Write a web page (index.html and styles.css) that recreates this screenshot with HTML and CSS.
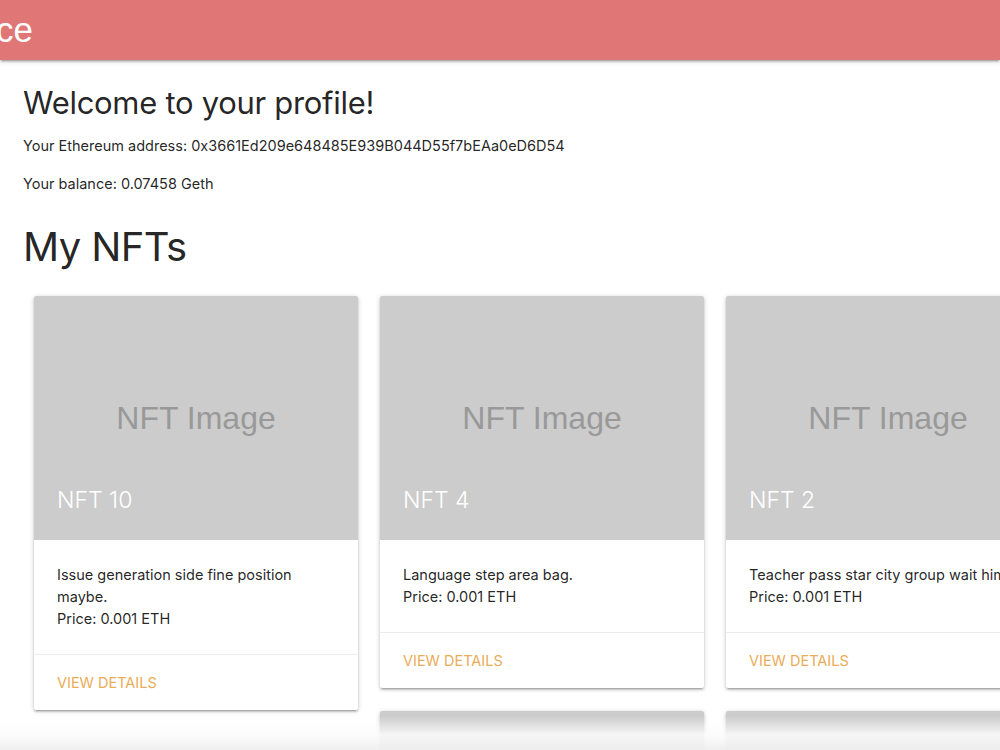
FILE: index.html
```
<!DOCTYPE html>
<html lang="en">

<head>
  <meta charset="UTF-8">
  <meta name="viewport" content="width=device-width, initial-scale=1.0">
  <title>My Profile</title>
  <link rel="stylesheet" href="styles.css">
</head>

<body>
  <nav class="navbar">
    <span class="brand">ce</span>
  </nav>

  <main class="profile">
    <h1 class="welcome">Welcome to your profile!</h1>
    <p class="info">Your Ethereum address: 0x3661Ed209e648485E939B044D55f7bEAa0eD6D54</p>
    <p class="info">Your balance: 0.07458 Geth</p>

    <h2 class="section-title">My NFTs</h2>

    <div class="nft-columns">
      <div class="nft-column">
        <div class="card">
          <div class="card-image">
            <span class="placeholder">NFT Image</span>
            <span class="card-title">NFT 10</span>
          </div>
          <div class="card-content">
            <p>Issue generation side fine position maybe.</p>
            <p>Price: 0.001 ETH</p>
          </div>
          <div class="card-action">
            <a href="#">View details</a>
          </div>
        </div>
      </div>

      <div class="nft-column">
        <div class="card">
          <div class="card-image">
            <span class="placeholder">NFT Image</span>
            <span class="card-title">NFT 4</span>
          </div>
          <div class="card-content">
            <p>Language step area bag.</p>
            <p>Price: 0.001 ETH</p>
          </div>
          <div class="card-action">
            <a href="#">View details</a>
          </div>
        </div>
        <div class="card card-short">
          <div class="card-image"></div>
        </div>
      </div>

      <div class="nft-column">
        <div class="card">
          <div class="card-image">
            <span class="placeholder">NFT Image</span>
            <span class="card-title">NFT 2</span>
          </div>
          <div class="card-content">
            <p>Teacher pass star city group wait him.</p>
            <p>Price: 0.001 ETH</p>
          </div>
          <div class="card-action">
            <a href="#">View details</a>
          </div>
        </div>
        <div class="card card-short">
          <div class="card-image"></div>
        </div>
      </div>
    </div>
  </main>

  <div class="bottom-fade"></div>
</body>

</html>
```

FILE: styles.css
```
html,
body {
  overflow: hidden;
}

body {
  margin: 0;
  font-family: Inter, "Liberation Sans", Arial, sans-serif;
  color: rgba(0, 0, 0, 0.87);
  background-color: #fff;
}

.navbar {
  height: 60px;
  background-color: #e07676;
  box-shadow: 0 2px 2px 0 rgba(0, 0, 0, 0.14), 0 3px 1px -2px rgba(0, 0, 0, 0.12), 0 1px 5px 0 rgba(0, 0, 0, 0.2);
  display: flex;
  align-items: center;
}

.brand {
  margin-left: -4px;
  color: #fff;
  font-family: "Liberation Sans", Arial, sans-serif;
  font-size: 35px;
  line-height: 1;
  margin-bottom: 2px;
}

.profile {
  padding: 0 23px;
}

.welcome {
  margin: 26px 0 15px;
  font-size: 31px;
  font-weight: 400;
  line-height: 1.1;
  letter-spacing: -0.3px;
}

.info {
  margin: 0 0 16px;
  font-size: 14.5px;
  line-height: 22px;
}

.section-title {
  margin: 30px 0 27px;
  font-size: 40px;
  font-weight: 400;
  line-height: 1.1;
  letter-spacing: -0.6px;
}

.nft-columns {
  display: flex;
  gap: 22px;
  margin-left: 11px;
  align-items: flex-start;
}

.nft-column {
  flex: 0 0 324px;
  display: flex;
  flex-direction: column;
  gap: 23px;
}

.card {
  background-color: #fff;
  border-radius: 2px;
  box-shadow: 0 2px 2px 0 rgba(0, 0, 0, 0.14), 0 3px 1px -2px rgba(0, 0, 0, 0.12), 0 1px 5px 0 rgba(0, 0, 0, 0.2);
  overflow: hidden;
}

.card-image {
  position: relative;
  height: 244px;
  background-color: #cccccc;
  display: flex;
  align-items: center;
  justify-content: center;
}

.placeholder {
  color: #999;
  font-family: "Liberation Sans", Arial, sans-serif;
  font-size: 32px;
}

.card-title {
  position: absolute;
  left: 23px;
  bottom: 24px;
  color: #fff;
  font-size: 23px;
  font-weight: 300;
  line-height: 32px;
}

.card-content {
  padding: 24px 24px 24px 23px;
  font-size: 14.5px;
  line-height: 22px;
}

.card-content p {
  margin: 0;
  white-space: nowrap;
}

.card-content p:first-child {
  white-space: normal;
}

.card-action {
  border-top: 1px solid rgba(160, 160, 160, 0.2);
  padding: 16px 24px 16px 23px;
  line-height: 22px;
}

.card-action a {
  color: #e9ac58;
  text-decoration: none;
  text-transform: uppercase;
  font-size: 14.5px;
}

.bottom-fade {
  position: fixed;
  left: 0;
  right: 0;
  bottom: 0;
  height: 34px;
  background: linear-gradient(to bottom, rgba(255, 255, 255, 0) 0%, rgba(252, 252, 252, 0.88) 55%, rgba(238, 238, 238, 0.95) 100%);
}
```
